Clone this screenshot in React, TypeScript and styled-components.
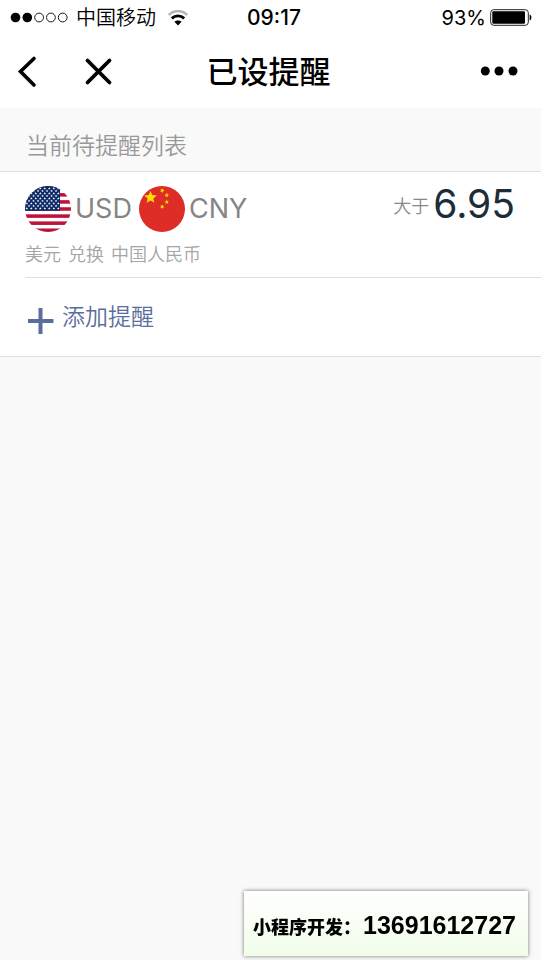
import React from 'react';
import styled, { createGlobalStyle } from 'styled-components';

const GlobalStyle = createGlobalStyle`
  * { box-sizing: border-box; }
  body {
    margin: 0;
    background: #f9f9f9;
    color: #000;
    font-family: Inter, "Noto Sans CJK SC", sans-serif;
  }
  h1, h2, p { margin: 0; }
`;

const Page = styled.div`
  min-height: 100vh;
`;

const TopArea = styled.header`
  background: #fff;
`;

const StatusBar = styled.div`
  display: grid;
  grid-template-columns: 1fr auto 1fr;
  align-items: center;
  height: 36px;
  padding: 0 9px 0 10px;
  font-size: 20px;
  line-height: 32px;
`;

const StatusGroup = styled.div<{ $end?: boolean }>`
  display: flex;
  align-items: center;
  justify-content: ${(p) => (p.$end ? 'flex-end' : 'flex-start')};
  gap: ${(p) => (p.$end ? '4px' : '8px')};
  white-space: nowrap;
`;

const Carrier = styled.span`
  font-weight: 350;
`;

const Clock = styled.time`
  padding-left: 6px;
  font-size: 21px;
  font-weight: 500;
`;

const WifiBox = styled.span`
  display: flex;
  margin-left: 4px;
`;

const NavBar = styled.nav`
  display: grid;
  grid-template-columns: 1fr auto 1fr;
  align-items: center;
  height: 72px;
  padding: 0 16px 0 12px;
`;

const NavGroup = styled.div<{ $end?: boolean }>`
  display: flex;
  gap: 38px;
  justify-content: ${(p) => (p.$end ? 'flex-end' : 'flex-start')};
`;

const IconButton = styled.button`
  display: flex;
  padding: 0;
  border: 0;
  background: none;
  color: inherit;
  cursor: pointer;
`;

const Title = styled.h1`
  font-size: 31px;
  line-height: 40px;
  font-weight: 500;
`;

const SectionTitle = styled.h2`
  padding: 20px 26px 7px;
  color: #999;
  font-size: 23px;
  line-height: 36px;
  font-weight: 350;
`;

const Card = styled.section`
  border-top: 1px solid #dedede;
  border-bottom: 1px solid #dedede;
  background: #fff;
`;

const ReminderRow = styled.article`
  display: flex;
  justify-content: space-between;
  margin-left: 25px;
  padding: 14px 26px 8px 0;
  border-bottom: 1px solid #dedede;
`;

const Pair = styled.div`
  display: flex;
  align-items: center;
  gap: 7px;
`;

const Currency = styled.div`
  display: flex;
  align-items: center;
  gap: 4px;
  color: #858585;
  font-size: 27px;
  line-height: 46px;
  font-weight: 400;
`;

const Description = styled.p`
  display: flex;
  gap: 7px;
  margin-top: 9px;
  color: #a5a5a5;
  font-size: 18px;
  line-height: 28px;
  font-weight: 350;
`;

const Condition = styled.div`
  display: flex;
  align-items: center;
  gap: 4px;
  height: 36px;
  line-height: 36px;
`;

const Operator = styled.span`
  padding-top: 6px;
  color: #888;
  font-size: 18px;
  font-weight: 350;
`;

const Rate = styled.strong`
  color: #1c2d38;
  font-size: 39px;
  font-weight: 400;
`;

const AddButton = styled.button`
  display: flex;
  align-items: center;
  gap: 8px;
  width: 100%;
  height: 78px;
  padding: 0 28px;
  border: 0;
  background: none;
  color: #5a6e9c;
  font: inherit;
  font-size: 23px;
  font-weight: 350;
  line-height: 36px;
  cursor: pointer;

  svg { margin-top: 8px; }
`;

const ContactBanner = styled.aside`
  position: fixed;
  right: 13px;
  bottom: 4px;
  display: flex;
  align-items: center;
  gap: 2px;
  height: 65px;
  padding: 4px 12px 0 9px;
  background: linear-gradient(#fff, #f1fdea);
  box-shadow: 0 0 4px rgba(0, 0, 0, 0.55);
  font-size: 18px;
  font-weight: 900;
  white-space: nowrap;
`;

const Phone = styled.a`
  color: #000;
  font-family: "Liberation Sans", Arial, sans-serif;
  font-size: 25px;
  font-weight: 700;
  text-decoration: none;
`;

function Signal() {
  return (
    <svg width="58" height="12" viewBox="0 0 58 12" aria-label="信号">
      {[0, 1, 2, 3, 4].map((i) => (
        <circle key={i} cx={5.5 + i * 11.8} cy="5.500" r={i < 2 ? 4.8 : 4.4} fill={i < 2 ? '#000' : 'none'} stroke="#000" strokeWidth={i < 2 ? 0 : 0.9} />
      ))}
    </svg>
  );
}

function Wifi() {
  return (
    <svg width="20" height="16" viewBox="0 0 20 16" fill="none" aria-label="无线网络">
      <path d="M.8 5C6-.3 14-.3 19.200 5" stroke="#b4b4b4" strokeWidth="2.400" />
      <path d="M3.800 8.400c3.600-3.300 8.800-3.300 12.400 0" stroke="#000" strokeWidth="2.800" />
      <path d="M6.400 11.800c2-1.900 5.200-1.900 7.200 0L10 15.400z" fill="#000" />
    </svg>
  );
}

function Battery() {
  return (
    <svg width="42" height="18" viewBox="0 0 42 18" aria-label="电池">
      <rect x=".7" y=".7" width="37.600" height="15.600" rx="3" fill="#fff" stroke="#222" strokeWidth="1" />
      <rect x="2.300" y="2.300" width="32.700" height="12.400" rx="1.200" fill="#000" />
      <path d="M39.600 5.500c2.400.6 2.400 5.400 0 6z" fill="#000" />
    </svg>
  );
}

function starPoints(cx: number, cy: number, r: number, turn = 0) {
  return Array.from({ length: 10 }, (_, i) => {
    const radius = i % 2 ? r * 0.45 : r;
    const a = ((turn - 90 + i * 36) * Math.PI) / 180;
    return `${(cx + radius * Math.cos(a)).toFixed(2)},${(cy + radius * Math.sin(a)).toFixed(2)}`;
  }).join(' ');
}

function UsFlag() {
  const rows = [2, 4.5, 7, 9.5, 12, 14.5, 17, 19.5, 22];
  return (
    <svg width="46" height="46" viewBox="0 0 46 46" role="img" aria-label="美国国旗">
      <clipPath id="us"><circle cx="23" cy="23" r="23" /></clipPath>
      <g clipPath="url(#us)">
        <rect width="46" height="46" fill="#fff" />
        {[0, 1, 2, 3, 4, 5, 6].map((i) => (
          <rect key={i} y={i * 7.08} width="46" height="3.540" fill="#bf1238" />
        ))}
        <rect width="35" height="24.800" fill="#0b2a66" />
        {rows.map((y, r) =>
          Array.from({ length: r % 2 ? 7 : 8 }, (_, c) => (
            <polygon key={`${r}-${c}`} points={starPoints(1.8 + c * 4.5 + (r % 2 ? 2.25 : 0), y + 0.4, 1.4)} fill="#fff" />
          )),
        )}
      </g>
    </svg>
  );
}

function CnFlag() {
  return (
    <svg width="46" height="46" viewBox="0 0 46 46" role="img" aria-label="中国国旗">
      <circle cx="23" cy="23" r="23" fill="#de2d26" />
      <g fill="#ffde00">
        <polygon points={starPoints(11.5, 11.5, 6.6)} />
        <polygon points={starPoints(23.2, 4.6, 2.4, 20)} />
        <polygon points={starPoints(27.8, 9.2, 2.4, 8)} />
        <polygon points={starPoints(27.8, 16, 2.4)} />
        <polygon points={starPoints(23.2, 20.8, 2.4, 20)} />
      </g>
    </svg>
  );
}

export default function App() {
  return (
    <Page>
      <GlobalStyle />
      <TopArea>
        <StatusBar>
          <StatusGroup>
            <Signal />
            <Carrier>中国移动</Carrier>
            <WifiBox><Wifi /></WifiBox>
          </StatusGroup>
          <Clock>09:17</Clock>
          <StatusGroup $end>
            <span>93%</span>
            <Battery />
          </StatusGroup>
        </StatusBar>
        <NavBar>
          <NavGroup>
            <IconButton type="button" aria-label="返回">
              <svg width="34" height="34" viewBox="0 0 34 34" fill="none" stroke="#000" strokeWidth="3.600" strokeLinecap="round">
                <path d="M22 3.500 8.500 16.500 22 30" strokeLinejoin="miter" />
              </svg>
            </IconButton>
            <IconButton type="button" aria-label="关闭">
              <svg width="30" height="34" viewBox="0 0 30 34" fill="none" stroke="#000" strokeWidth="3.800" strokeLinecap="round">
                <path d="M3.500 5.500 25.500 27.500M25.500 5.500 3.500 27.500" />
              </svg>
            </IconButton>
          </NavGroup>
          <Title>已设提醒</Title>
          <NavGroup $end>
            <IconButton type="button" aria-label="更多">
              <svg width="46" height="34" viewBox="0 0 46 34">
                <circle cx="6.300" cy="16" r="4.500" />
                <circle cx="20" cy="16" r="4.500" />
                <circle cx="34" cy="16" r="4.500" />
              </svg>
            </IconButton>
          </NavGroup>
        </NavBar>
      </TopArea>
      <main>
        <SectionTitle>当前待提醒列表</SectionTitle>
        <Card>
          <ReminderRow>
            <div>
              <Pair>
                <Currency><UsFlag />USD</Currency>
                <Currency><CnFlag />CNY</Currency>
              </Pair>
              <Description>
                <span>美元</span>
                <span>兑换</span>
                <span>中国人民币</span>
              </Description>
            </div>
            <Condition>
              <Operator>大于</Operator>
              <Rate>6.95</Rate>
            </Condition>
          </ReminderRow>
          <AddButton type="button">
            <svg width="26" height="26" viewBox="0 0 26 26" stroke="#5a6e9c" strokeWidth="4" aria-hidden="true">
              <path d="M12.500 0v26M0 13h25.500" />
            </svg>
            添加提醒
          </AddButton>
        </Card>
      </main>
      <ContactBanner>
        <span>小程序开发：</span>
        <Phone href="tel:13691612727">13691612727</Phone>
      </ContactBanner>
    </Page>
  );
}
